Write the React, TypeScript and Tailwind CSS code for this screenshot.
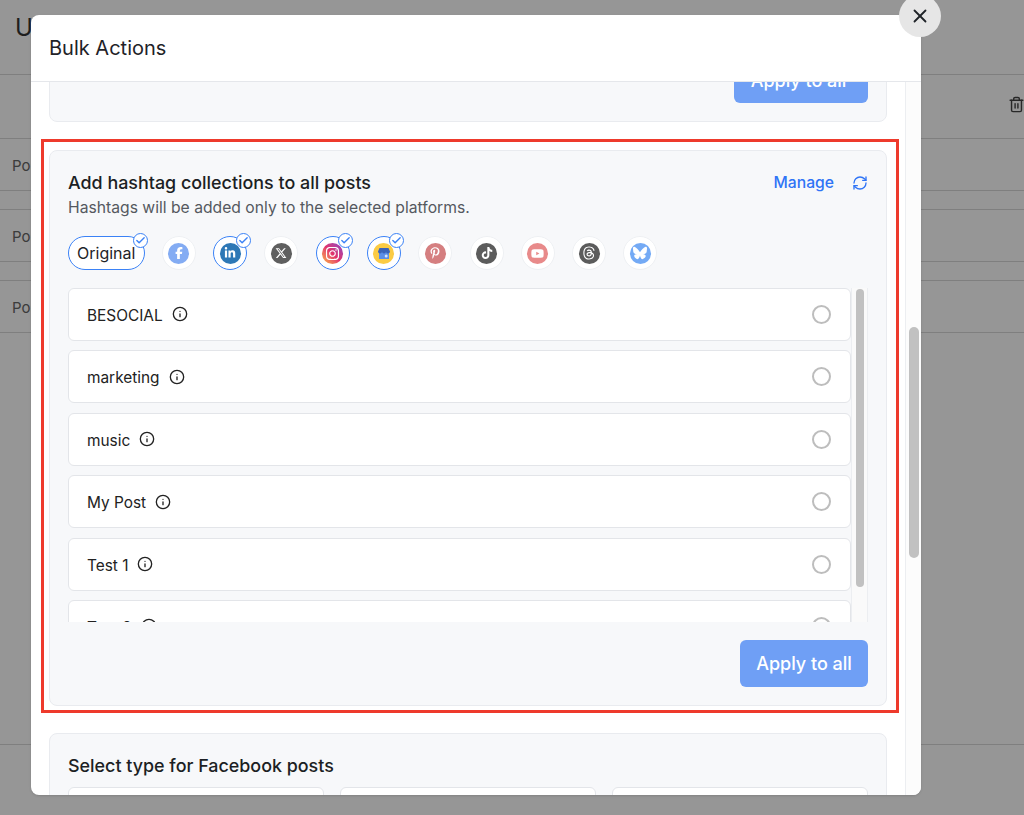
import { Check, Info, RefreshCw, Trash2, X } from "lucide-react";
import type { ReactNode } from "react";
import {
  FaBluesky,
  FaFacebookF,
  FaInstagram,
  FaLinkedinIn,
  FaPinterestP,
  FaThreads,
  FaTiktok,
  FaXTwitter,
  FaYoutube,
} from "react-icons/fa6";

const font = "font-['Inter','Noto_Sans',sans-serif]";

function CheckBadge() {
  return (
    <span className="absolute -right-[4.5px] -top-[4px] flex h-[15px] w-[15px] items-center justify-center rounded-full border-[1.7px] border-[#3b82f6] bg-white text-[#3b82f6]">
      <Check size={11} strokeWidth={3} />
    </span>
  );
}

function PlatformIcon({ selected, color, children }: { selected?: boolean; color: string; children: ReactNode }) {
  return (
    <div
      className={`relative flex h-[34px] w-[34px] shrink-0 items-center justify-center rounded-full border-[1.5px] bg-white ${
        selected ? "border-[#3b82f6]" : "border-[#eef0f3]"
      }`}
    >
      <span
        className={`flex h-[21px] w-[21px] items-center justify-center rounded-full text-[12px] text-white ${color}`}
      >
        {children}
      </span>
      {selected && <CheckBadge />}
    </div>
  );
}

function StoreGlyph() {
  return (
    <svg width="12" height="11" viewBox="0 0 12 11">
      <rect x="1" y="3" width="10" height="8" fill="#5b8fe8" />
      <path d="M1.5 0h9L12 3.6a2 2 0 0 1-4 0 2 2 0 0 1-4 0 2 2 0 0 1-4 0z" fill="#3a63b8" />
      <circle cx="8.2" cy="8" r="1.5" fill="#d5e3fb" />
    </svg>
  );
}

function CollectionRow({ name }: { name: string }) {
  return (
    <div className="mb-[9.4px] flex h-[53px] shrink-0 items-center justify-between rounded-[6px] border border-[#e3e5e9] bg-white pl-[18px] pr-[19.5px]">
      <div className="flex items-center gap-[9px] text-[15.4px] text-[#222]">
        <span className="pt-[2px]">{name}</span>
        <Info size={16} strokeWidth={2} className="text-[#222]" />
      </div>
      <span className="h-[19px] w-[19px] rounded-full border-2 border-[#bdbdbd] bg-white" />
    </div>
  );
}

function BackgroundRow() {
  return (
    <div className="flex h-[53px] shrink-0 items-center border-y border-[#d9d9d9] pl-[12px] pt-[4px] text-[15px] text-[#666]">
      Post
    </div>
  );
}

function BackgroundPage() {
  return (
    <div className={`flex h-[815px] flex-col bg-white text-[#333] ${font}`}>
      <div className="h-[75px] shrink-0 border-b border-[#d9d9d9] pl-[15px] pt-[13px] text-[24px] leading-[30px]">Upload</div>
      <div className="flex h-[63px] shrink-0 items-center justify-end pb-[4px]">
        <Trash2 size={17} className="mr-[-1px] text-[#444]" />
      </div>
      <div className="flex flex-col gap-[18px]">
        <BackgroundRow />
        <BackgroundRow />
        <BackgroundRow />
      </div>
      <div className="mt-[411px] border-t border-[#d9d9d9]" />
    </div>
  );
}

export default function App() {
  return (
    <div className={`relative h-[815px] overflow-hidden ${font}`}>
      <BackgroundPage />
      <div className="absolute inset-0 bg-black/[0.41]">
        <div className="absolute left-[31px] top-[15px] flex h-[780px] w-[890px] flex-col rounded-[8px] bg-white shadow-sm">
          <div className="flex h-[67px] shrink-0 items-center rounded-t-[8px] border-b border-[#e5e7eb] pl-[18px] text-[20px] text-[#1f2328]">
            Bulk Actions
          </div>

          <div className="flex min-h-0 flex-1 overflow-hidden rounded-b-[8px]">
            <div className="min-w-0 flex-1 px-[18px]">
              <div className="-mt-[31px] flex h-[71px] items-end justify-end rounded-[8px] border border-[#e9ebef] bg-[#f7f8fa] pb-[18px] pr-[18px]">
                <button className="h-[47px] w-[134px] rounded-[6px] bg-[#6f9ff5] pr-[5px] pt-[2px] text-[18px] font-medium text-white">
                  Apply to all
                </button>
              </div>

              <div className="-ml-[8px] -mr-[12px] mt-[17px] border-[3px] border-[#ee3a2c] pb-[4px] pl-[5px] pr-[9px] pt-[8px]">
                <div className="flex h-[556px] flex-col rounded-[8px] border border-[#e9ebef] bg-[#f7f8fa] px-[18px] pt-[20px]">
                  <div className="flex items-start justify-between">
                    <div>
                      <div className="text-[17.9px] font-medium leading-[24px] text-[#1c1f24]">
                        Add hashtag collections to all posts
                      </div>
                      <div className="mt-[2px] text-[15.7px] leading-[22px] text-[#55595f]">
                        Hashtags will be added only to the selected platforms.
                      </div>
                    </div>
                    <div className="flex h-[24px] items-center gap-[18px] text-[#2f74f6]">
                      <span className="text-[15.7px] font-medium">Manage</span>
                      <RefreshCw size={16} strokeWidth={2} />
                    </div>
                  </div>

                  <div className="mt-[17px] flex gap-[17.3px]">
                    <div className="relative flex h-[34px] w-[76.5px] shrink-0 items-center justify-center rounded-full border-[1.5px] border-[#3b82f6] bg-white text-[16px] text-[#1f2328]">
                      Original
                      <CheckBadge />
                    </div>
                    <PlatformIcon color="bg-[#84acf3]"><FaFacebookF /></PlatformIcon>
                    <PlatformIcon selected color="bg-[#2e78b6]"><FaLinkedinIn /></PlatformIcon>
                    <PlatformIcon color="bg-[#5f5f5f]"><FaXTwitter /></PlatformIcon>
                    <PlatformIcon selected color="bg-gradient-to-tr from-[#f9b233] via-[#e1306c] to-[#8a3ac8]"><FaInstagram size={15} /></PlatformIcon>
                    <PlatformIcon selected color="bg-[#fbcb43]"><StoreGlyph /></PlatformIcon>
                    <PlatformIcon color="bg-[#d57f80]"><FaPinterestP /></PlatformIcon>
                    <PlatformIcon color="bg-[#5c5c5c]"><FaTiktok /></PlatformIcon>
                    <PlatformIcon color="bg-[#e88a8a]"><FaYoutube size={13} /></PlatformIcon>
                    <PlatformIcon color="bg-[#5c5c5c]"><FaThreads size={14} /></PlatformIcon>
                    <PlatformIcon color="bg-[#74aaf5]"><FaBluesky size={14} /></PlatformIcon>
                  </div>

                  <div className="mt-[18px] flex h-[334px] overflow-hidden">
                    <div className="flex min-w-0 flex-1 flex-col">
                      {["BESOCIAL", "marketing", "music", "My Post", "Test 1", "Test 2"].map((name) => (
                        <CollectionRow key={name} name={name} />
                      ))}
                    </div>
                    <div className="w-[17px] shrink-0 border-x border-[#eceef1] bg-[#fafafa] pl-[4px] pt-[1px]">
                      <div className="h-[298px] w-[8px] rounded-full bg-[#c1c1c1]" />
                    </div>
                  </div>

                  <div className="mt-[18px] flex justify-end">
                    <button className="h-[47px] w-[128px] rounded-[6px] bg-[#6f9ff5] text-[18px] font-medium text-white">
                      Apply to all
                    </button>
                  </div>
                </div>
              </div>

              <div className="mt-[20px] rounded-[8px] border border-[#e9ebef] bg-[#f7f8fa] px-[18px] pt-[20px]">
                <div className="text-[17.9px] font-medium leading-[24px] text-[#1c1f24]">Select type for Facebook posts</div>
                <div className="mt-[9px] grid grid-cols-3 gap-[16px]">
                  <div className="h-[60px] rounded-[6px] border border-[#e3e5e9] bg-white" />
                  <div className="h-[60px] rounded-[6px] border border-[#e3e5e9] bg-white" />
                  <div className="h-[60px] rounded-[6px] border border-[#e3e5e9] bg-white" />
                </div>
              </div>
            </div>

            <div className="w-[16px] shrink-0 border-l border-[#eceef1] bg-[#fcfcfc] pl-[3px] pt-[245px]">
              <div className="h-[231px] w-[10px] rounded-full bg-[#c1c1c1]" />
            </div>
          </div>

          <button className="absolute -right-[20px] -top-[20px] flex h-[42px] w-[42px] items-center justify-center rounded-full bg-[#e6e6e6] text-[#1f2328]">
            <X size={22} strokeWidth={2} />
          </button>
        </div>
      </div>
    </div>
  );
}
